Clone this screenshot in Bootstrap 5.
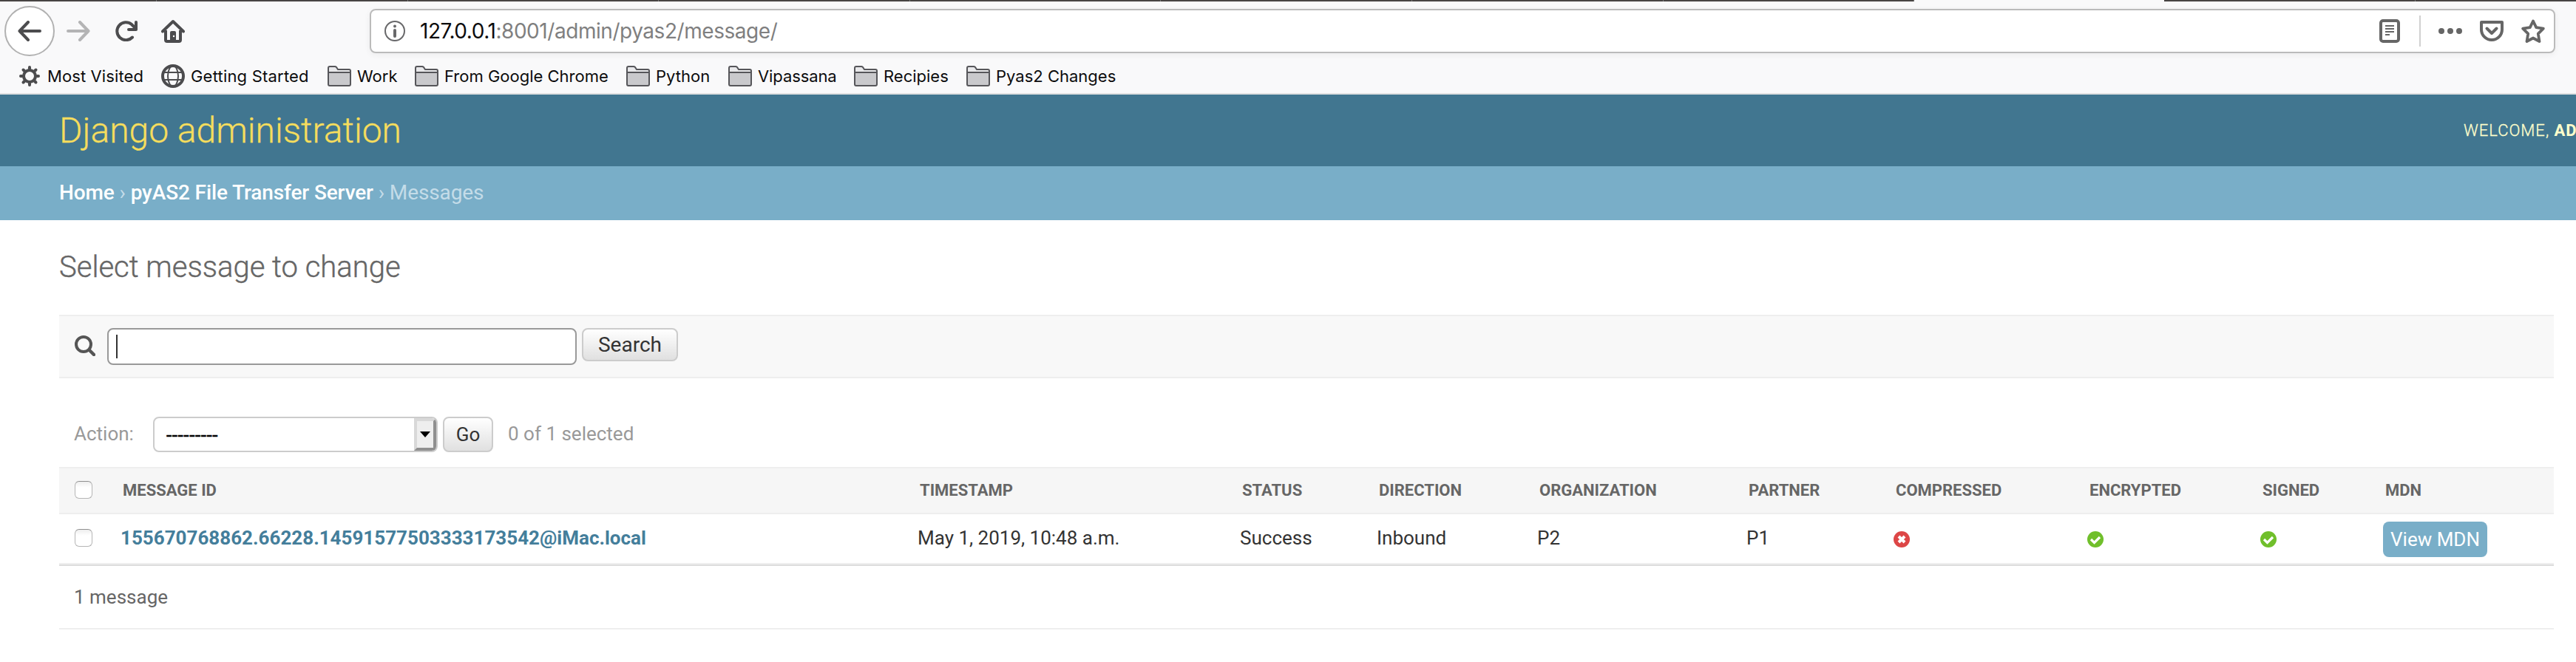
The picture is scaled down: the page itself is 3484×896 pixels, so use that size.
<!DOCTYPE html>
<html lang="en">
<head>
<meta charset="utf-8">
<title>Select message to change | Django site admin</title>
<link href="https://cdn.jsdelivr.net/npm/bootstrap@5.3.0/dist/css/bootstrap.min.css" rel="stylesheet">
<style>
  body { font-family: Roboto, sans-serif; font-size: 26px; color: #333; background: #fff; overflow: hidden; width: 3484px; height: 896px; }
  svg { display: block; flex: none; }
  .ui-font { font-family: Inter, sans-serif; }
  .chrome { height: 128px; background: #f9f9fa; border-bottom: 2px solid #e0e0e1; }
  .tabstrip { height: 2px; }
  .tabstrip div { background: #474443; border-right: 1px solid #777; width: 339.6px; flex: none; }
  .tabstrip div:first-child { width: 212px; }
  .tabstrip .current { background: #f9f9fa; border: 0; width: 338px; }
  .toolbar { height: 80px; padding-left: 6px; }
  .back { width: 68px; height: 68px; border: 2px solid #b1b1b1; border-radius: 50%; background: #fff; }
  .forward { margin-left: 16px; }
  .reload { margin-left: 34px; }
  .home { margin-left: 32px; }
  .nav-icons { width: 494px; }
  .urlbar { width: 2956px; height: 60px; background: #fff; border: 2px solid #bbb; border-radius: 8px; box-shadow: 0 2px 8px rgba(0,0,0,.06); padding-left: 18px; padding-right: 12px; }
  .url { font-size: 28px; line-height: 40px; color: #7f7f80; margin-left: 20px; white-space: pre; letter-spacing: -.45px; }
  .url b { font-weight: 400; color: #0c0c0d; }
  .split { width: 2px; height: 42px; background: #d0d0d0; margin: 0 24px 0 26px; }
  .pocket { margin: 0 24px; }
  .bookmarks { height: 42px; padding-left: 26px; font-size: 22px; line-height: 42px; color: #0c0c0d; }
  .bm { flex: none; white-space: nowrap; padding-left: 8px; }
  .bm-visited { width: 164px; padding-left: 10px; letter-spacing: .1px; }
  .bm-started { width: 193px; letter-spacing: .2px; }
  .bm-work { width: 86px; }
  .bm-chrome { width: 254px; }
  .bm-python { width: 106px; }
  .bm-vipassana { width: 138px; letter-spacing: -.1px; }
  .bm-recipies { width: 120px; }
  .site { height: 97px; background: #417690; padding-left: 80px; }
  .site h1 { font-size: 48px; font-weight: 300; color: #f5dd5d; line-height: 60px; -webkit-text-stroke: .3px; }
  .welcome { font-size: 22px; font-weight: 300; color: #ffc; letter-spacing: 1px; width: 152px; white-space: nowrap; line-height: 30px; -webkit-text-stroke: .3px; }
  .welcome strong { font-weight: 700; -webkit-text-stroke: 0; }
  .crumbs { height: 73px; background: #79aec8; color: #c4dce8; padding: 0 80px 2px; font-size: 28px; white-space: pre; letter-spacing: -.12px; }
  .crumbs a { color: #fff; text-decoration: none; font-weight: 500; }
  main { padding: 40px 30px 0 80px; }
  .page-title { font-size: 40px; font-weight: 300; line-height: 48px; height: 88px; color: #666; -webkit-text-stroke: .4px; }
  .searchbar { height: 86px; background: #f8f8f8; border-top: 2px solid #eee; border-bottom: 2px solid #eee; padding: 16px 0 0 21px; }
  .lens { margin-top: 10px; }
  .searchbox { width: 635px; height: 50px; border: 2px solid #999; border-radius: 8px; background: #fff; margin-left: 16px; padding: 7px 10px; }
  .caret { width: 2px; height: 32px; background: #333; }
  .push { border: 2px solid #ccc; border-radius: 8px; background: linear-gradient(#fff, #e0e0e0); color: #333; text-align: center; padding: 0; margin-left: 7px; }
  .push.find { width: 130px; height: 45px; font-size: 28px; line-height: 41px; }
  .push.run { width: 68px; height: 48px; font-size: 26px; line-height: 42px; }
  .actions { height: 120px; padding: 52px 0 0 20px; color: #999; line-height: 46px; }
  .action-label { width: 107px; }
  .picked { padding-left: 16px; letter-spacing: .6px; -webkit-text-stroke: .6px; }
  .counter { margin-left: 20px; }
  .picker { width: 385px; height: 48px; border: 2px solid #ccc; border-radius: 8px; background: #fff; color: #000; overflow: hidden; }
  .picker .drop { width: 30px; background: #eee; border: solid; border-width: 4px; border-color: #d8d8d8 #8f8f8f #8f8f8f #d8d8d8; }
  .results { table-layout: fixed; width: 3374px; margin: 0; border-collapse: separate; border-spacing: 0; }
  .results th { height: 64px; padding: 0 0 0 19px; background: #f6f6f6; border-top: 2px solid #eee; border-bottom: 2px solid #eee; font-size: 22px; font-weight: 700; line-height: 30px; color: #666; text-transform: uppercase; vertical-align: middle; white-space: nowrap; }
  .results td { height: 68px; padding: 0 0 2px 16px; border-bottom: 2px solid #eee; line-height: 30px; vertical-align: middle; white-space: nowrap; }
  .results th:first-child, .results td:first-child { padding-left: 21px; }
  .results th .tick { margin-top: -2px; }
  .results td svg { margin-top: 4px; }
  .results a.rec { color: #447e9b; font-weight: 700; text-decoration: none; }
  .tick { width: 24px; height: 24px; border: 1.5px solid #b5b5b5; border-top-color: #8f8f8f; border-radius: 6px; background: linear-gradient(#eee, #fff 35%); }
  .mdn { display: block; width: 141px; height: 48px; border-radius: 8px; background: #79aec8; color: #fff; text-decoration: none; text-align: center; line-height: 48px; margin-top: 4px; }
  .total { height: 88px; border-top: 2px solid #ddd; border-bottom: 2px solid #eee; padding-left: 20px; line-height: 84px; color: #666; }
</style>
</head>
<body>
<svg width="0" height="0" class="position-absolute">
  <defs>
    <symbol id="folder" viewBox="0 0 32 28"><path d="M1 26V3q0-2 2-2h7q1 0 2 1l2 3h15q2 0 2 2v18q0 2-2 2H3q-2 0-2-2z" fill="#e8e8ea"/><path d="M1 10h30v15q0 2-2 2H3q-2 0-2-2z" fill="#c9c9cc"/><path d="M1 9h30M1 25V3q0-2 2-2h7q1 0 2 1l2 3h15q2 0 2 2v18q0 2-2 2H3q-2 0-2-2z" fill="none" stroke="#56565a" stroke-width="2"/></symbol>
    <symbol id="yes" viewBox="0 0 22 22"><circle cx="11" cy="11" r="11" fill="#70bf2b"/><path d="M5 11l4.500 4.500L17 8" fill="none" stroke="#fff" stroke-width="3.200"/></symbol>
    <symbol id="no" viewBox="0 0 22 22"><circle cx="11" cy="11" r="11" fill="#dd4646"/><path d="M7 7l8 8M15 7l-8 8" stroke="#fff" stroke-width="4"/></symbol>
  </defs>
</svg>
<header class="chrome ui-font">
  <div class="tabstrip d-flex"><div></div><div></div><div></div><div></div><div></div><div></div><div></div><div></div><div class="current"></div><div></div><div></div></div>
  <div class="toolbar d-flex align-items-center">
    <div class="nav-icons d-flex align-items-center">
      <div class="back d-flex align-items-center justify-content-center"><svg width="32" height="28" viewBox="0 0 32 28" fill="none" stroke="#4c4c4e" stroke-width="4" stroke-linecap="round" stroke-linejoin="round"><path d="M30 14H2.500M14 2L2.500 14 14 26"/></svg></div>
      <svg class="forward" width="32" height="28" viewBox="0 0 32 28" fill="none" stroke="#b4b4b5" stroke-width="4" stroke-linecap="round" stroke-linejoin="round"><path d="M2 14h27.500M18 2l11.500 12L18 26"/></svg>
      <svg class="reload" width="30" height="28" viewBox="0 0 30 28" fill="none" stroke="#4c4c4e" stroke-width="4" stroke-linecap="round" stroke-linejoin="round"><path d="M23 22.500A12 12 0 1 1 22 5l6 6"/><path d="M28 2v10H18"/></svg>
      <svg class="home" width="32" height="32" viewBox="0 0 32 32"><path d="M2 16.500L16 3l14 13.500" fill="none" stroke="#4c4c4e" stroke-width="4" stroke-linecap="round" stroke-linejoin="round"/><path d="M6 15v13q0 2 2 2h16q2 0 2-2V15" fill="none" stroke="#4c4c4e" stroke-width="4"/><path d="M12 30V18q0-2 2-2h4q2 0 2 2v12z" fill="#4c4c4e"/><circle cx="17" cy="23" r="1.200" fill="#fff"/></svg>
    </div>
    <div class="urlbar d-flex align-items-center">
      <svg width="28" height="28" viewBox="0 0 28 28"><circle cx="14" cy="14" r="13" fill="none" stroke="#68686a" stroke-width="2"/><circle cx="14" cy="7.500" r="2" fill="#68686a"/><path d="M14 13v8" stroke="#68686a" stroke-width="4" stroke-linecap="round"/></svg>
      <div class="url"><b>127.0.0.1</b>:8001/admin/pyas2/message/</div>
      <svg class="ms-auto" width="28" height="32" viewBox="0 0 28 32"><rect x="2" y="2" width="24" height="28" rx="3" fill="none" stroke="#666" stroke-width="4"/><path d="M8 9h12M8 13h12M8 17h12M8 21h6" stroke="#666" stroke-width="2"/></svg>
      <div class="split"></div>
      <svg width="32" height="8" viewBox="0 0 32 8" fill="#666"><circle cx="4" cy="4" r="4"/><circle cx="16" cy="4" r="4"/><circle cx="28" cy="4" r="4"/></svg>
      <svg class="pocket" width="32" height="28" viewBox="0 0 32 28"><path d="M2 2h28v10a14 14 0 0 1-28 0z" fill="none" stroke="#666" stroke-width="4" stroke-linejoin="round"/><path d="M9.500 10.500l6.500 6.500 6.500-6.500" fill="none" stroke="#666" stroke-width="4" stroke-linecap="round" stroke-linejoin="round"/></svg>
      <svg width="32" height="32" viewBox="0 0 32 32"><path d="M16 2.500l4.200 8.700 9.600 1.500-7 7L24.500 30 16 25.500 7.500 30l1.700-10.300-7-7 9.600-1.500z" fill="none" stroke="#666" stroke-width="3.800" stroke-linejoin="round"/></svg>
    </div>
  </div>
  <nav class="bookmarks d-flex align-items-center">
    <svg width="28" height="28" viewBox="0 0 28 28" fill="none" stroke="#4c4c4e"><circle cx="14" cy="14" r="8" stroke-width="4"/><path d="M14 2v3M14 23v3M2 14h3M23 14h3M5.500 5.500l2 2M20.500 20.500l2 2M22.500 5.500l-2 2M7.500 20.500l-2 2" stroke-width="4" stroke-linecap="round"/></svg>
    <span class="bm bm-visited">Most Visited</span>
    <svg width="32" height="32" viewBox="0 0 32 32" fill="none" stroke="#4c4c4e"><circle cx="16" cy="16" r="14" stroke-width="4"/><ellipse cx="16" cy="16" rx="7" ry="14" stroke-width="2"/><path d="M3 11h26M3 21h26" stroke-width="2"/></svg>
    <span class="bm bm-started">Getting Started</span>
    <svg width="32" height="28"><use href="#folder"/></svg>
    <span class="bm bm-work">Work</span>
    <svg width="32" height="28"><use href="#folder"/></svg>
    <span class="bm bm-chrome">From Google Chrome</span>
    <svg width="32" height="28"><use href="#folder"/></svg>
    <span class="bm bm-python">Python</span>
    <svg width="32" height="28"><use href="#folder"/></svg>
    <span class="bm bm-vipassana">Vipassana</span>
    <svg width="32" height="28"><use href="#folder"/></svg>
    <span class="bm bm-recipies">Recipies</span>
    <svg width="32" height="28"><use href="#folder"/></svg>
    <span class="bm">Pyas2 Changes</span>
  </nav>
</header>
<div class="site d-flex align-items-center justify-content-between">
  <h1 class="m-0">Django administration</h1>
  <div class="welcome">WELCOME, <strong>AD</strong></div>
</div>
<nav class="crumbs d-flex align-items-center"><span><a href="#">Home</a> › <a href="#">pyAS2 File Transfer Server</a> › Messages</span></nav>
<main>
  <h2 class="page-title m-0">Select message to change</h2>
  <form class="searchbar d-flex align-items-start">
    <svg class="lens" width="28" height="28" viewBox="0 0 28 28" fill="none" stroke="#555"><circle cx="12" cy="12" r="10" stroke-width="4"/><path d="M19.500 19.500L26 26" stroke-width="4.500" stroke-linecap="round"/></svg>
    <div class="searchbox"><div class="caret"></div></div>
    <button type="button" class="push find">Search</button>
  </form>
  <div class="actions d-flex align-items-start">
    <div class="action-label">Action:</div>
    <div class="picker d-flex justify-content-between"><span class="picked">---------</span><span class="drop d-flex align-items-center justify-content-center"><svg width="14" height="8" viewBox="0 0 14 8"><path d="M0 0h14L7 8z"/></svg></span></div>
    <button type="button" class="push run">Go</button>
    <div class="counter">0 of 1 selected</div>
  </div>
  <table class="results">
    <colgroup><col style="width:67px"><col style="width:1078px"><col style="width:436px"><col style="width:185px"><col style="width:217px"><col style="width:283px"><col style="width:199px"><col style="width:262px"><col style="width:234px"><col style="width:166px"><col style="width:247px"></colgroup>
    <thead><tr><th><div class="tick"></div></th><th>Message ID</th><th>Timestamp</th><th>Status</th><th>Direction</th><th>Organization</th><th>Partner</th><th>Compressed</th><th>Encrypted</th><th>Signed</th><th>MDN</th></tr></thead>
    <tbody><tr><td><div class="tick"></div></td><td><a class="rec" href="#">155670768862.66228.14591577503333173542@iMac.local</a></td><td>May 1, 2019, 10:48 a.m.</td><td>Success</td><td>Inbound</td><td>P2</td><td>P1</td>
      <td><svg width="22" height="22"><use href="#no"/></svg></td><td><svg width="22" height="22"><use href="#yes"/></svg></td><td><svg width="22" height="22"><use href="#yes"/></svg></td><td><a class="mdn" href="#">View MDN</a></td></tr></tbody>
  </table>
  <div class="total">1 message</div>
</main>
<script src="https://cdn.jsdelivr.net/npm/bootstrap@5.3.0/dist/js/bootstrap.bundle.min.js"></script>
</body>
</html>
